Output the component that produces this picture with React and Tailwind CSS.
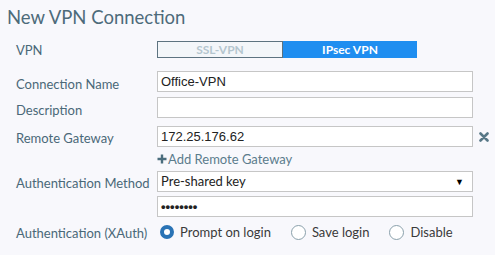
import React from "react";

const label = "text-[13px] leading-[16px] text-[#4a6878]";
const box = "w-[316px] h-[21px] border border-[#c6c6c6] bg-white flex items-center px-[3px]";

function Radio({ checked, children }) {
  return (
    <label className="flex items-center gap-[6px]">
      {checked ? (
        <span className="w-[14px] h-[14px] rounded-full border-[4px] border-[#2a73b5] bg-white" />
      ) : (
        <span className="w-[15px] h-[15px] rounded-full border border-[#8aa0ab] bg-white" />
      )}
      <span className="text-[13px] leading-[16px] text-[#3a3a3a]">{children}</span>
    </label>
  );
}

export default function App() {
  return (
    <div className="w-[495px] h-[255px] bg-[#f8f8fc] font-['Lato',sans-serif] overflow-hidden">
      <h1 className="pl-[7px] pt-[5px] text-[18.5px] leading-[24px] text-[#4d6b7a]">New VPN Connection</h1>

      <div className="pl-[16px] mt-[12px] grid grid-cols-[141px_1fr] items-center">
        <span className={label}>VPN</span>
        <div className="flex w-[260px] h-[17px] text-[12px] leading-none">
          <div className="w-[126px] border border-[#5d7380] bg-[#f3f6f9] text-[#b5c6cf] flex items-center justify-center font-bold">SSL-VPN</div>
          <div className="flex-1 bg-[#1f8ef0] text-white flex items-center justify-center font-bold">IPsec VPN</div>
        </div>
      </div>

      <div className="pl-[16px] mt-[13px] grid grid-cols-[141px_1fr] items-center">
        <span className={`${label} pt-[4px]`}>Connection Name</span>
        <div className={`${box} font-['Liberation_Sans',sans-serif] text-[13px] text-[#222]`}>Office-VPN</div>
      </div>

      <div className="pl-[16px] mt-[5px] grid grid-cols-[141px_1fr] items-center">
        <span className={`${label} pt-[4px]`}>Description</span>
        <div className={box} />
      </div>

      <div className="pl-[16px] mt-[8px] grid grid-cols-[141px_1fr] items-center">
        <span className={`${label} pt-[2px]`}>Remote Gateway</span>
        <div className="flex items-center">
          <div className={`${box} font-['Liberation_Sans',sans-serif] text-[13px] text-[#222]`}>172.25.176.62</div>
          <svg className="ml-[6px]" width="10" height="10" viewBox="0 0 10 10">
            <path d="M1.5 1.5 L8.5 8.5 M8.5 1.5 L1.5 8.5" stroke="#587887" strokeWidth="2.6" strokeLinecap="round" />
          </svg>
        </div>
      </div>

      <div className="pl-[157px] mt-[2px] flex items-center h-[20px] text-[13px] leading-[16px] text-[#5b7c8c]">
        <svg width="10" height="10" viewBox="0 0 10 10" className="mr-[1px]">
          <path d="M5 0.5 V9.5 M0.5 5 H9.5" stroke="#4b6d7d" strokeWidth="2.4" />
        </svg>
        Add Remote Gateway
      </div>

      <div className="pl-[16px] mt-[2px] grid grid-cols-[141px_1fr] items-center">
        <span className={`${label} pt-[2px]`}>Authentication Method</span>
        <div className={`${box} h-[20px] justify-between pr-[8px] text-[13px] text-[#222]`}>
          <span>Pre-shared key</span>
          <span className="text-[9px] text-black">▼</span>
        </div>
      </div>

      <div className="pl-[157px] mt-[4px]">
        <div className={`${box} font-['Liberation_Sans',sans-serif] text-[13px] font-bold text-[#222]`}>••••••••</div>
      </div>

      <div className="pl-[16px] mt-[6px] grid grid-cols-[141px_1fr] items-center">
        <span className={`${label} pt-[2px]`}>Authentication (XAuth)</span>
        <div className="flex items-center pl-[3px] gap-[20px]">
          <Radio checked>Prompt on login</Radio>
          <Radio>Save login</Radio>
          <Radio>Disable</Radio>
        </div>
      </div>
    </div>
  );
}
